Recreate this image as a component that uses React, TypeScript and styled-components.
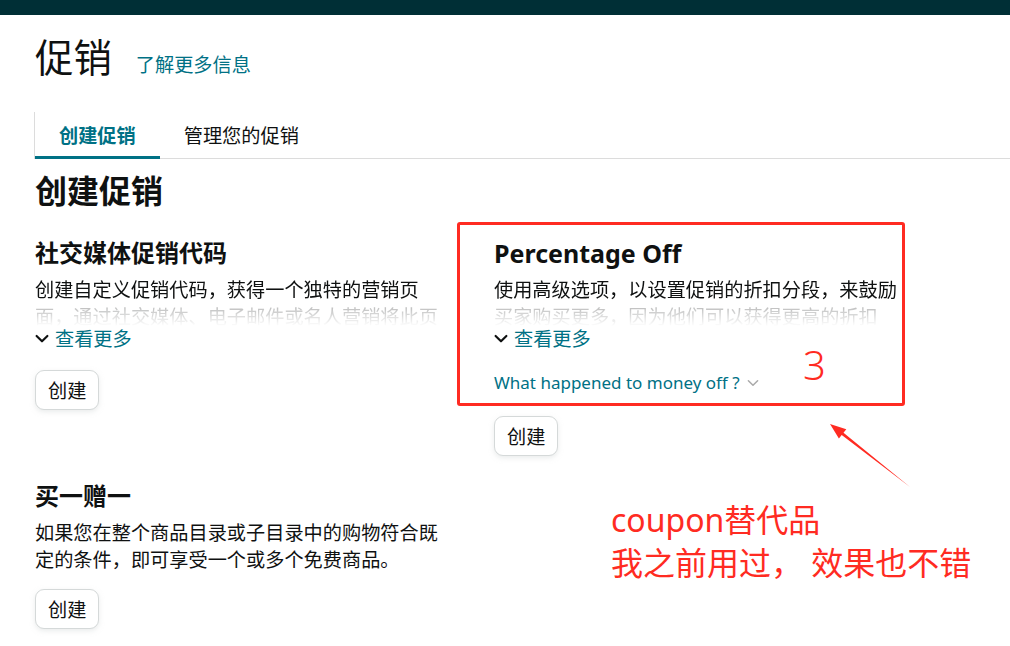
import React from 'react';
import styled, {createGlobalStyle} from 'styled-components';

const GlobalStyle = createGlobalStyle`
  body {
    margin: 0;
    background: #fff;
    color: #0f1111;
    font-family: "Noto Sans", "Noto Sans CJK SC", sans-serif;
  }
`;

const Screen = styled.div`
  position: relative;
  width: 1010px;
  height: 646px;
  overflow: hidden;
`;

const TopBar = styled.div`
  height: 15px;
  background: #002f36;
`;

const Page = styled.div`
  padding-left: 35px;
`;

const Header = styled.div`
  display: flex;
  align-items: baseline;
  gap: 24px;
  padding-top: 19px;
`;

const Title = styled.h1`
  margin: 0;
  font-size: 38.4px;
  line-height: 46px;
  font-weight: 400;
`;

const Link = styled.a`
  color: #007185;
  font-size: 19.2px;
  line-height: 26px;
  text-decoration: none;
  cursor: pointer;
`;

const TabBar = styled.div`
  display: flex;
  height: 46px;
  margin-top: 32px;
  margin-left: -1px;
  border-left: 1px solid #dcdcdc;
  border-bottom: 1px solid #dcdcdc;
`;

const Tab = styled.div<{$active?: boolean}>`
  box-sizing: border-box;
  height: 47px;
  margin-bottom: -1px;
  padding: 3px 24px 0;
  line-height: 42px;
  font-size: 19.2px;
  font-weight: ${(p) => (p.$active ? 700 : 400)};
  color: ${(p) => (p.$active ? '#007185' : '#0f1111')};
  border-bottom: 3px solid ${(p) => (p.$active ? '#007185' : 'transparent')};
`;

const PageHeading = styled.h2`
  margin: 12px 0 0;
  font-size: 32px;
  line-height: 40px;
  font-weight: 700;
`;

const Grid = styled.div`
  display: grid;
  grid-template-columns: 410px 410px;
  column-gap: 49px;
  row-gap: 24px;
  margin-top: 26px;
  align-items: start;
`;

const Section = styled.div`
  display: flex;
  flex-direction: column;
  align-items: flex-start;
`;

const SectionTitle = styled.h3<{$latin?: boolean}>`
  margin: 0;
  font-size: ${(p) => (p.$latin ? 25 : 24)}px;
  line-height: 32px;
  font-weight: 700;
`;

const Desc = styled.p<{$clamped?: boolean}>`
  margin: 7px 0 0;
  font-size: 19.2px;
  line-height: 27px;
  overflow: hidden;
  ${(p) =>
    p.$clamped &&
    `
    max-height: 50px;
    -webkit-mask-image: linear-gradient(to bottom, #000 52%, rgba(0,0,0,0.3) 58%, transparent 100%);
    mask-image: linear-gradient(to bottom, #000 52%, rgba(0,0,0,0.3) 58%, transparent 100%);
  `}
`;

const Toggle = styled.div`
  display: flex;
  align-items: center;
  gap: 6px;
  font-size: 19.2px;
  line-height: 26px;
  color: #007185;
  cursor: pointer;
`;

const Hint = styled.div`
  display: flex;
  align-items: center;
  gap: 7px;
  margin-top: 18px;
  font-size: 17px;
  line-height: 26px;
  color: #007185;
`;

const Button = styled.button<{$gap: number}>`
  margin-top: ${(p) => p.$gap}px;
  height: 40px;
  padding: 0 12px;
  border: 1px solid #d5d9d9;
  border-radius: 9px;
  background: #fff;
  box-shadow: 0 2px 5px rgba(213, 217, 217, 0.5);
  font-family: "Noto Sans CJK SC", sans-serif;
  font-size: 19.2px;
  color: #0f1111;
  cursor: pointer;
`;

const MarkBox = styled.div`
  position: absolute;
  left: 457px;
  top: 222px;
  width: 448px;
  height: 184px;
  box-sizing: border-box;
  border: 3px solid #ff2b22;
  border-radius: 3px;
  pointer-events: none;
`;

const MarkNumber = styled.div`
  position: absolute;
  left: 803px;
  top: 345px;
  font-size: 40px;
  line-height: 40px;
  font-weight: 300;
  color: #ff2b22;
`;

const Arrow = styled.svg`
  position: absolute;
  left: 820px;
  top: 415px;
`;

const Note = styled.div`
  position: absolute;
  left: 611px;
  top: 498px;
  font-family: "Noto Sans", "Noto Sans CJK SC", sans-serif;
  font-size: 32px;
  line-height: 43px;
  color: #ff2b22;
  white-space: pre;
`;

const Chevron = ({size = 14, color = '#0f1111', width = 2.2}) => (
  <svg width={size} height={size * 0.7} viewBox='0 0 14 10'>
    <polyline
      points='1.5,2 7,7.5 12.5,2'
      fill='none'
      stroke={color}
      strokeWidth={width}
      strokeLinecap='round'
      strokeLinejoin='round'
    />
  </svg>
);

const App: React.FC = () => {
  return (
    <Screen>
      <GlobalStyle />
      <TopBar />
      <Page>
        <Header>
          <Title>促销</Title>
          <Link>了解更多信息</Link>
        </Header>

        <TabBar>
          <Tab $active>创建促销</Tab>
          <Tab>管理您的促销</Tab>
        </TabBar>

        <PageHeading>创建促销</PageHeading>

        <Grid>
          <Section>
            <SectionTitle>社交媒体促销代码</SectionTitle>
            <Desc $clamped>
              创建自定义促销代码，获得一个独特的营销页面，通过社交媒体、电子邮件或名人营销将此页面分享给买家。
            </Desc>
            <Toggle>
              <Chevron />
              查看更多
            </Toggle>
            <Button $gap={18}>创建</Button>
          </Section>

          <Section>
            <SectionTitle $latin>Percentage Off</SectionTitle>
            <Desc $clamped>
              使用高级选项，以设置促销的折扣分段，来鼓励买家购买更多，因为他们可以获得更高的折扣率。
            </Desc>
            <Toggle>
              <Chevron />
              查看更多
            </Toggle>
            <Hint>
              What happened to money off ?
              <Chevron size={12} color='#aaa' width={1.8} />
            </Hint>
            <Button $gap={20}>创建</Button>
          </Section>

          <Section>
            <SectionTitle>买一赠一</SectionTitle>
            <Desc>
              如果您在整个商品目录或子目录中的购物符合既定的条件，即可享受一个或多个免费商品。
            </Desc>
            <Button $gap={16}>创建</Button>
          </Section>
        </Grid>
      </Page>

      {/* red annotations drawn over the page */}
      <MarkBox />
      <MarkNumber>3</MarkNumber>
      <Arrow width='100' height='80' viewBox='820 415 100 80'>
        <polygon
          points='830,424 846.3,429.2 843.5,432.7 910,487 841.7,435.1 838.9,438.6'
          fill='#ff2b22'
        />
      </Arrow>
      <Note>{'coupon替代品\n我之前用过， 效果也不错'}</Note>
    </Screen>
  );
};

export default App;
